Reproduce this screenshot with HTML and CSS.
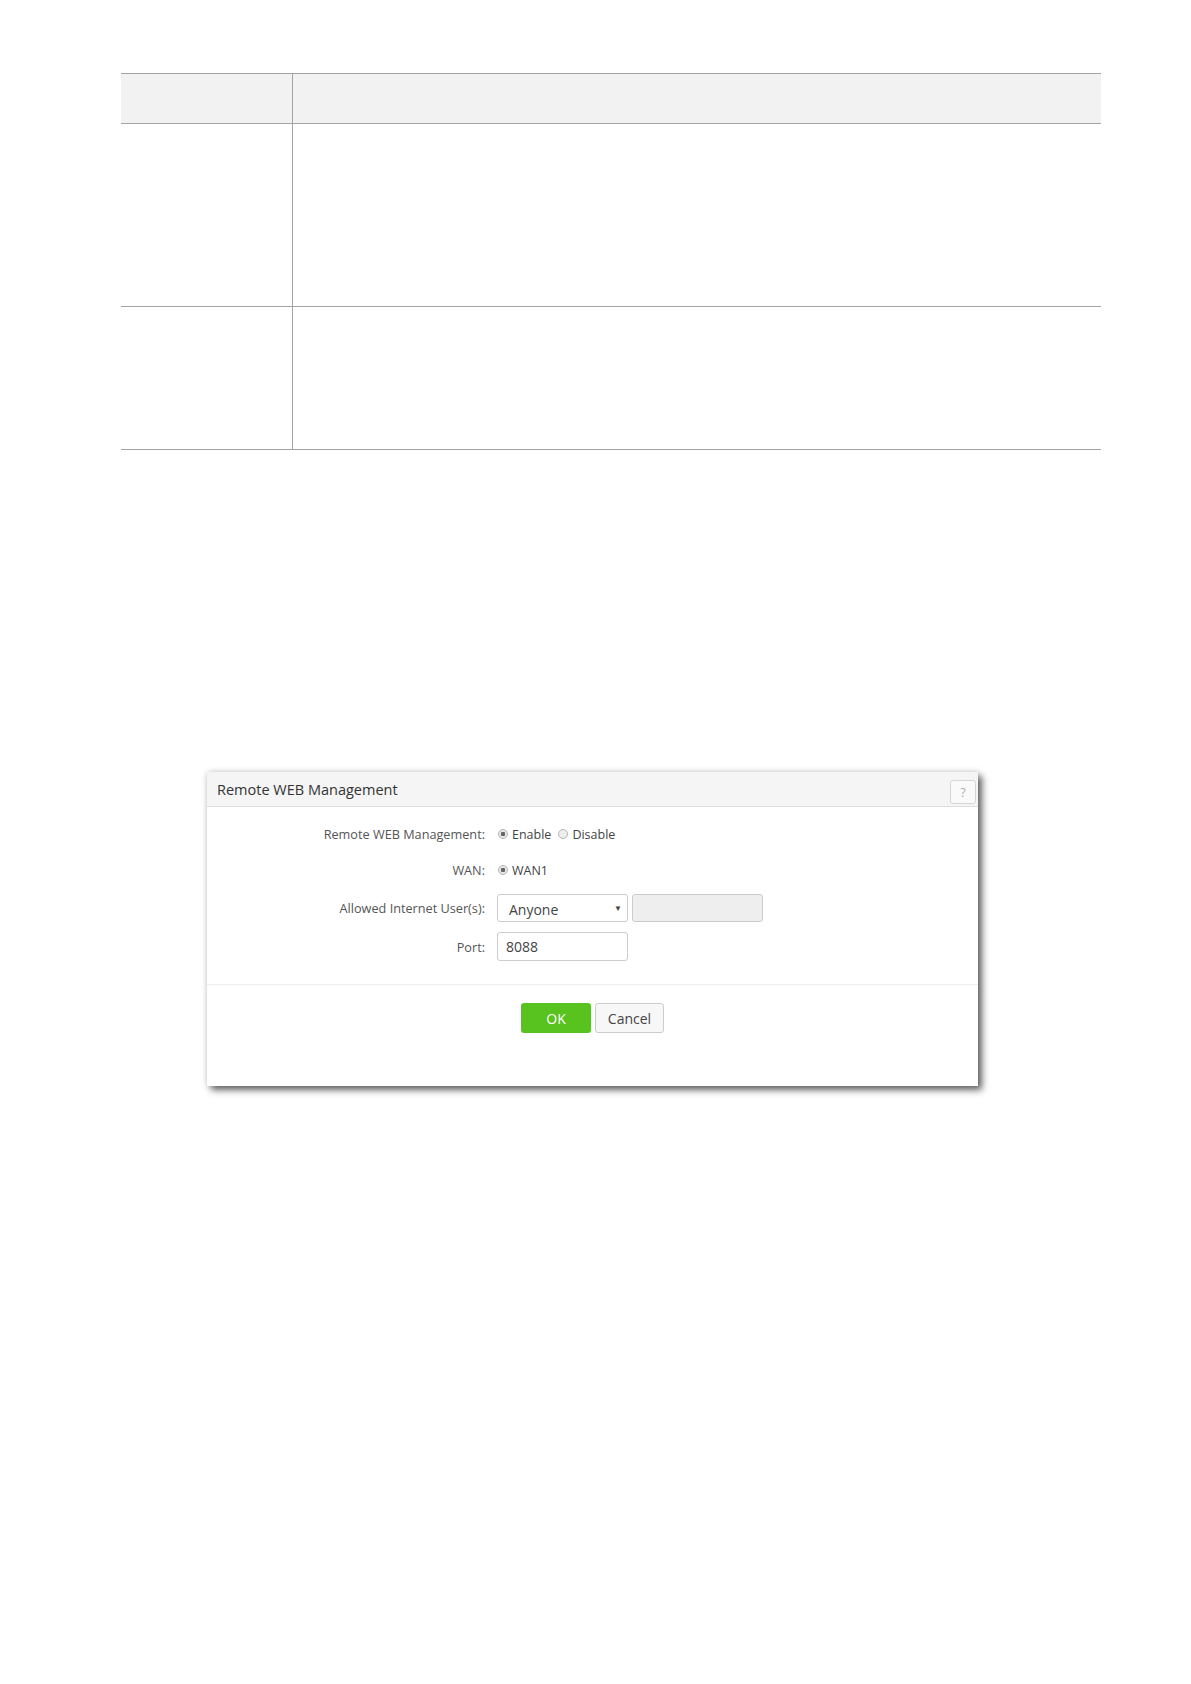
FILE: index.html
```html
<!DOCTYPE html>
<html lang="en">
<head>
    <meta charset="UTF-8">
    <meta name="viewport" content="width=device-width, initial-scale=1.0">
    <title>Remote WEB Management</title>
    <link rel="stylesheet" href="styles.css">
</head>
<body>
    <div class="page">
        <table class="spec-table">
            <thead>
                <tr>
                    <th class="col-name"></th>
                    <th class="col-desc"></th>
                </tr>
            </thead>
            <tbody>
                <tr class="row-tall">
                    <td></td>
                    <td></td>
                </tr>
                <tr class="row-short">
                    <td></td>
                    <td></td>
                </tr>
            </tbody>
        </table>

        <div class="dialog">
            <div class="dialog-head">
                <span class="dialog-title">Remote WEB Management</span>
                <button type="button" class="help-btn">?</button>
            </div>

            <form class="dialog-body">
                <div class="field tight">
                    <label class="field-label">Remote WEB Management:</label>
                    <div class="field-ctrl">
                        <label class="radio"><input type="radio" name="remote" checked> Enable</label>
                        <label class="radio"><input type="radio" name="remote"> Disable</label>
                    </div>
                </div>
                <div class="field">
                    <label class="field-label">WAN:</label>
                    <div class="field-ctrl">
                        <label class="radio"><input type="radio" name="wan" checked> WAN1</label>
                    </div>
                </div>
                <div class="field">
                    <label class="field-label" for="allowed">Allowed Internet User(s):</label>
                    <div class="field-ctrl">
                        <div class="select-wrap">
                            <select id="allowed" class="select">
                                <option>Anyone</option>
                            </select>
                        </div>
                        <input type="text" class="text-input" disabled>
                    </div>
                </div>
                <div class="field">
                    <label class="field-label" for="port">Port:</label>
                    <div class="field-ctrl">
                        <input type="text" id="port" class="text-input port" value="8088">
                    </div>
                </div>
            </form>

            <div class="dialog-foot">
                <button type="button" class="btn btn-ok">OK</button>
                <button type="button" class="btn btn-cancel">Cancel</button>
            </div>
        </div>
    </div>
</body>
</html>
```

FILE: styles.css
```css
body {
    margin: 0;
    background: #fff;
    font-family: "Open Sans", "Noto Sans", Arial, sans-serif;
    color: #333;
}
.page {
    padding-top: 73px;
    padding-bottom: 80px;
}

/* empty parameter table */
.spec-table {
    margin-left: 121px;
    width: 980px;
    border-collapse: collapse;
    border-spacing: 0;
}
.spec-table th, .spec-table td {
    padding: 0;
    border-top: 1px solid #a3a3a3;
    border-bottom: 1px solid #a3a3a3;
}
.spec-table th {
    height: 49px;
    background: #f2f2f2;
}
.spec-table th:first-child, .spec-table td:first-child {
    width: 171px;
    border-right: 1px solid #a3a3a3;
}
.row-tall td {
    height: 182px;
}
.row-short td {
    height: 142px;
}

/* dialog */
.dialog {
    margin-top: 322px;
    margin-left: 207px;
    width: 771px;
    background: #fff;
    box-shadow: 4px 4px 7px rgba(0, 0, 0, 0.6), 0 0 6px rgba(0, 0, 0, 0.15);
}
.dialog-head {
    display: flex;
    align-items: center;
    justify-content: space-between;
    height: 34px;
    padding: 0 2px 0 10px;
    background: #f5f5f5;
    border-bottom: 1px solid #ddd;
}
.dialog-title {
    font-size: 14.5px;
    color: #333;
}
.help-btn {
    margin-top: 6px;
    width: 26px;
    height: 24px;
    padding: 0;
    border: 1px solid #d6d6d6;
    border-radius: 3px;
    background: #fafafa;
    color: #aaa;
    font-family: inherit;
    font-size: 12px;
}

.dialog-body {
    margin: 0;
    padding: 13px 0 23px;
    border-bottom: 1px solid #eee;
}
.field {
    display: flex;
    align-items: center;
    height: 28px;
    margin-bottom: 10px;
}
.field:last-child {
    height: 29px;
    margin-bottom: 0;
}
.field.tight {
    margin-bottom: 8px;
}
.field-label {
    width: 278px;
    text-align: right;
    font-size: 12.7px;
    color: #555;
}
.field-ctrl {
    display: flex;
    align-items: center;
    gap: 4px;
    margin-left: 12px;
    height: 100%;
}

.radio {
    display: flex;
    align-items: center;
    margin-right: 2px;
    font-size: 12.5px;
    color: #444;
}
.radio input {
    appearance: none;
    -webkit-appearance: none;
    width: 10px;
    height: 10px;
    margin: 0 4px 0 1px;
    border: 1px solid #b5b5b5;
    border-radius: 50%;
    background: #eee;
}
.radio input:checked {
    background: radial-gradient(circle, #666 0, #666 2px, #e6e6e6 2.5px);
}

.select-wrap {
    position: relative;
    height: 100%;
}
.select-wrap::after {
    content: "\25BC";
    position: absolute;
    right: 6px;
    top: 8px;
    font-size: 8px;
    color: #444;
    pointer-events: none;
}
.select {
    appearance: none;
    -webkit-appearance: none;
    width: 131px;
    height: 100%;
    padding: 3px 0 0 11px;
    border: 1px solid #ccc;
    border-radius: 3px;
    background: #fff;
    font-family: inherit;
    font-size: 14px;
    color: #444;
}
.text-input {
    box-sizing: border-box;
    width: 131px;
    height: 100%;
    padding: 0 8px;
    border: 1px solid #ccc;
    border-radius: 3px;
    font-family: inherit;
    font-size: 14px;
    color: #444;
}
.text-input:disabled {
    background: #eee;
}

.dialog-foot {
    display: flex;
    justify-content: center;
    gap: 4px;
    padding: 18px 0 53px;
}
.btn {
    height: 30px;
    border-radius: 3px;
    font-family: inherit;
    font-size: 14px;
    cursor: pointer;
}
.btn-ok {
    width: 70px;
    border: none;
    background: #58c21e;
    color: #fff;
}
.btn-cancel {
    width: 69px;
    border: 1px solid #ccc;
    background: #f7f7f7;
    color: #444;
}
```
